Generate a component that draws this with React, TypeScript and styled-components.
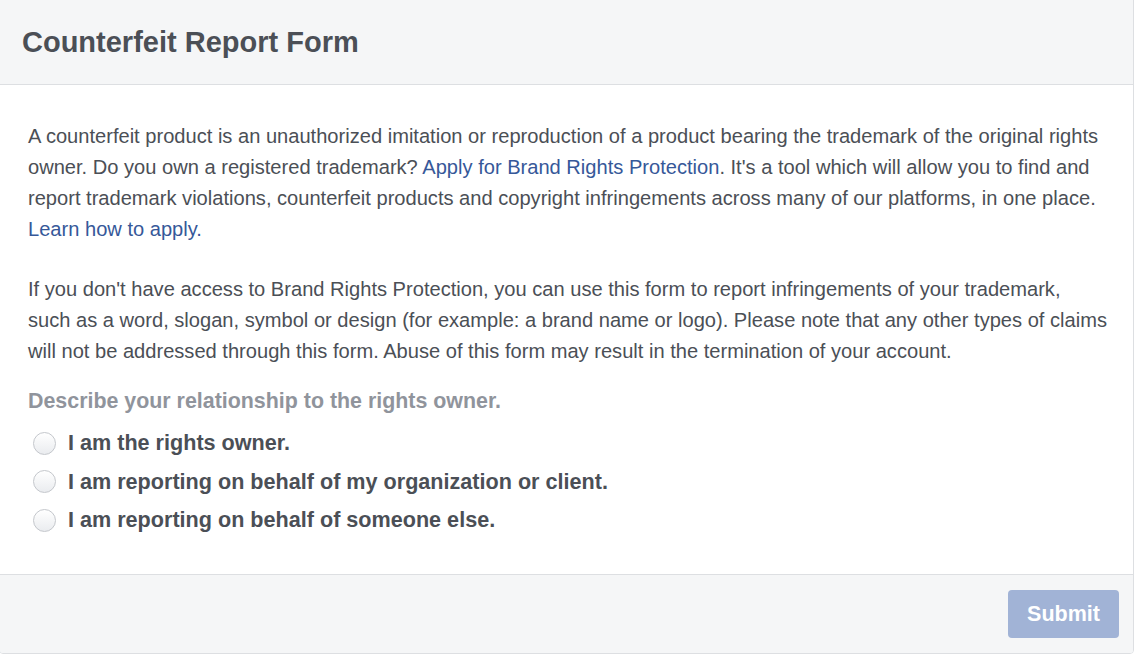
import styled, { createGlobalStyle } from 'styled-components'

const GlobalStyle = createGlobalStyle`
  html, body {
    margin: 0;
    padding: 0;
    background: #fff;
    font-family: "Liberation Sans", Arial, Helvetica, sans-serif;
  }
`

const Card = styled.div`
  margin: -1px 0 0 -1px;
  width: 1135px;
  border: 1px solid #dddfe2;
  border-radius: 0 0 4px 4px;
  box-sizing: border-box;
  overflow: hidden;
  background: #fff;
`

const Header = styled.div`
  height: 85px;
  box-sizing: border-box;
  display: flex;
  align-items: center;
  padding: 0 22px;
  background: #f5f6f7;
  border-bottom: 1px solid #dddfe2;
`

const Title = styled.h1`
  margin: 0;
  font-size: 29px;
  font-weight: bold;
  color: #4b4f56;
`

const Body = styled.div`
  padding: 36px 18px 41px 28px;
`

const Paragraph = styled.p`
  margin: 0 0 29px;
  font-size: 20.1px;
  line-height: 31px;
  color: #4b4f56;
`

const Link = styled.a`
  color: #365899;
  text-decoration: none;
`

const Question = styled.div`
  font-size: 21.4px;
  font-weight: bold;
  color: #90949c;
  line-height: 26px;
  margin-top: -8px;
  margin-bottom: 16px;
`

const Options = styled.div`
  display: flex;
  flex-direction: column;
  gap: 12.5px;
`

const Option = styled.label`
  display: flex;
  align-items: center;
  gap: 12px;
  padding-left: 5px;
  font-size: 21.6px;
  font-weight: bold;
  color: #4b4f56;
  line-height: 26px;
  cursor: pointer;
`

const Radio = styled.span`
  width: 21px;
  height: 21px;
  border-radius: 50%;
  border: 1px solid #c4c7cc;
  background: linear-gradient(#ffffff, #eaecef);
  flex-shrink: 0;
`

const Footer = styled.div`
  height: 79px;
  box-sizing: border-box;
  display: flex;
  justify-content: flex-end;
  align-items: center;
  padding: 0 14px;
  background: #f5f6f7;
  border-top: 1px solid #dddfe2;
`

const SubmitButton = styled.button`
  width: 111px;
  height: 48px;
  border: none;
  border-radius: 4px;
  background: #a1b3d6;
  color: #fff;
  font-family: inherit;
  font-size: 21.5px;
  font-weight: bold;
  cursor: default;
`

const options = [
  'I am the rights owner.',
  'I am reporting on behalf of my organization or client.',
  'I am reporting on behalf of someone else.',
]

export default function App() {
  return (
    <>
      <GlobalStyle />
      <Card>
        <Header>
          <Title>Counterfeit Report Form</Title>
        </Header>
        <Body>
          <Paragraph>
            A counterfeit product is an unauthorized imitation or reproduction of a product bearing the
            trademark of the original rights owner. Do you own a registered trademark?{' '}
            <Link href="#">Apply for Brand Rights Protection</Link>. It's a tool which will allow you to
            find and report trademark violations, counterfeit products and copyright infringements across
            many of our platforms, in one place.
            <br />
            <Link href="#">Learn how to apply.</Link>
          </Paragraph>
          <Paragraph>
            If you don't have access to Brand Rights Protection, you can use this form to report
            infringements of your trademark,
            <br />
            such as a word, slogan, symbol or design (for example: a brand name or logo). Please note
            that any other types of claims will not be addressed through this form. Abuse of this form
            may result in the termination of your account.
          </Paragraph>
          <Question>Describe your relationship to the rights owner.</Question>
          <Options>
            {options.map((text) => (
              <Option key={text}>
                <Radio />
                {text}
              </Option>
            ))}
          </Options>
        </Body>
        <Footer>
          <SubmitButton disabled>Submit</SubmitButton>
        </Footer>
      </Card>
    </>
  )
}
